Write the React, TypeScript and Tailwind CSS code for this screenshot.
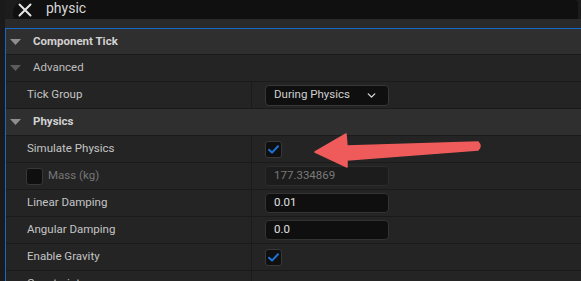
import { ChevronDown } from 'lucide-react';

type Row =
  | { kind: 'header'; label: string; bold?: boolean; h: string }
  | { kind: 'text'; label: string; value: string; disabled?: boolean }
  | { kind: 'check'; label: string }
  | { kind: 'combo'; label: string; value: string };

const rows: Row[] = [
  { kind: 'header', label: 'Component Tick', bold: true, h: 'h-[26px]' },
  { kind: 'header', label: 'Advanced', h: 'h-[27px]' },
  { kind: 'combo', label: 'Tick Group', value: 'During Physics' },
  { kind: 'header', label: 'Physics', bold: true, h: 'h-[27px]' },
  { kind: 'check', label: 'Simulate Physics' },
  { kind: 'text', label: 'Mass (kg)', value: '177.334869', disabled: true },
  { kind: 'text', label: 'Linear Damping', value: '0.01' },
  { kind: 'text', label: 'Angular Damping', value: '0.0' },
  { kind: 'check', label: 'Enable Gravity' },
  { kind: 'text', label: 'Constraints', value: '' },
];

function Checkbox({ checked }: { checked: boolean }) {
  return (
    <div className="w-[17px] h-[17px] rounded-[3px] bg-[#0f0f0f] border border-[#383838] flex items-center justify-center">
      {checked && (
        <svg width="11" height="9" viewBox="0 0 11 9">
          <path d="M1 4.8 L4 7.6 L10 1.2" fill="none" stroke="#1b74d6" strokeWidth="2" strokeLinecap="round" strokeLinejoin="round" />
        </svg>
      )}
    </div>
  );
}

function Triangle({ bright }: { bright?: boolean }) {
  return (
    <svg width="11" height="6" viewBox="0 0 11 6" className="ml-[4px] mr-[12px]">
      <path d="M0 0 L11 0 L5.5 6 Z" fill={bright ? '#8e8e8e' : '#5c5c5c'} />
    </svg>
  );
}

function PropRow({ row }: { row: Exclude<Row, { kind: 'header' }> }) {
  const dim = row.kind === 'text' && row.disabled;
  return (
    <div className="h-[27px] shrink-0 flex border-b border-[#1a1a1a] bg-[#242424]">
      <div className="w-[246px] shrink-0 flex items-center pl-[21px] border-r border-[#1b1b1b]">
        {dim && (
          <div className="mr-[5px] -ml-[1px]">
            <Checkbox checked={false} />
          </div>
        )}
        <span className={dim ? 'text-[#767676]' : 'text-[#c4c4c4]'}>{row.label}</span>
      </div>
      <div className="flex-1 flex items-center pl-[13px]">
        {row.kind === 'check' && <Checkbox checked />}
        {row.kind === 'combo' && (
          <div className="w-[124px] h-[21px] rounded-[4px] bg-[#0f0f0f] border border-[#373737] flex items-center justify-between pl-[8px] pr-[10px] text-[#cfcfcf]">
            <span>{row.value}</span>
            <ChevronDown size={13} strokeWidth={2.5} className="text-[#d8d8d8]" />
          </div>
        )}
        {row.kind === 'text' && row.value && (
          <div
            className={
              'w-[124px] h-[20px] rounded-[4px] border flex items-center pl-[8px] ' +
              (row.disabled ? 'bg-[#1c1c1c] border-[#2c2c2c] text-[#7a7a7a]' : 'bg-[#0f0f0f] border-[#333333] text-[#e0e0e0]')
            }
          >
            {row.value}
          </div>
        )}
      </div>
    </div>
  );
}

export default function App() {
  return (
    <div
      className="relative w-[581px] h-[281px] overflow-hidden bg-[#1c1c1c] flex text-[11.5px]"
      style={{ fontFamily: 'Roboto, "Open Sans", sans-serif' }}
    >
      <div className="w-[5px] shrink-0 bg-[#1a1a1a]" />
      <div className="flex-1 flex flex-col">
        {/* search */}
        <div className="h-[19px] shrink-0 overflow-hidden pl-[8px] pr-[3px] bg-[#1c1c1c]">
          <div className="-mt-[8px] h-[27px] rounded-l-[13px] rounded-r-[4px] bg-[#101010]">
            <div className="mt-[8px] h-[19px] flex items-center">
              <svg width="14" height="14" viewBox="0 0 14 14" className="ml-[5px]">
                <path d="M1.5 1.5 L12.5 12.5 M12.5 1.5 L1.5 12.5" stroke="#e6e6e6" strokeWidth="2" strokeLinecap="round" />
              </svg>
              <span className="ml-[14px] text-[14px] leading-[19px] -mt-[3px] text-[#d6d6d6]">physic</span>
            </div>
          </div>
        </div>
        <div className="h-[9px] shrink-0 bg-[#2a2a2a]" />
        {/* details panel */}
        <div className="flex-1 flex flex-col border-t border-l border-[#1768c8]">
          {rows.map((row) =>
            row.kind === 'header' ? (
              <div
                key={row.label}
                className={
                  row.h +
                  ' shrink-0 flex items-center border-b border-[#1a1a1a] ' +
                  (row.bold ? 'bg-[#2f2f2f] font-bold text-[#d2d2d2]' : 'bg-[#242424] text-[#bdbdbd]')
                }
              >
                <Triangle bright={row.bold} />
                <span>{row.label}</span>
              </div>
            ) : (
              <PropRow key={row.label} row={row} />
            )
          )}
        </div>
      </div>

      {/* annotation arrow */}
      <svg className="absolute left-0 top-0" width="581" height="281" viewBox="0 0 581 281">
        <path
          d="M315 152 L346 134 L347 146 L478 142 Q482 146 478 150 L347 160 L347 167 Z"
          fill="#ef5b5b"
          stroke="#ef5b5b"
          strokeWidth="1.5"
          strokeLinejoin="round"
        />
      </svg>
    </div>
  );
}
